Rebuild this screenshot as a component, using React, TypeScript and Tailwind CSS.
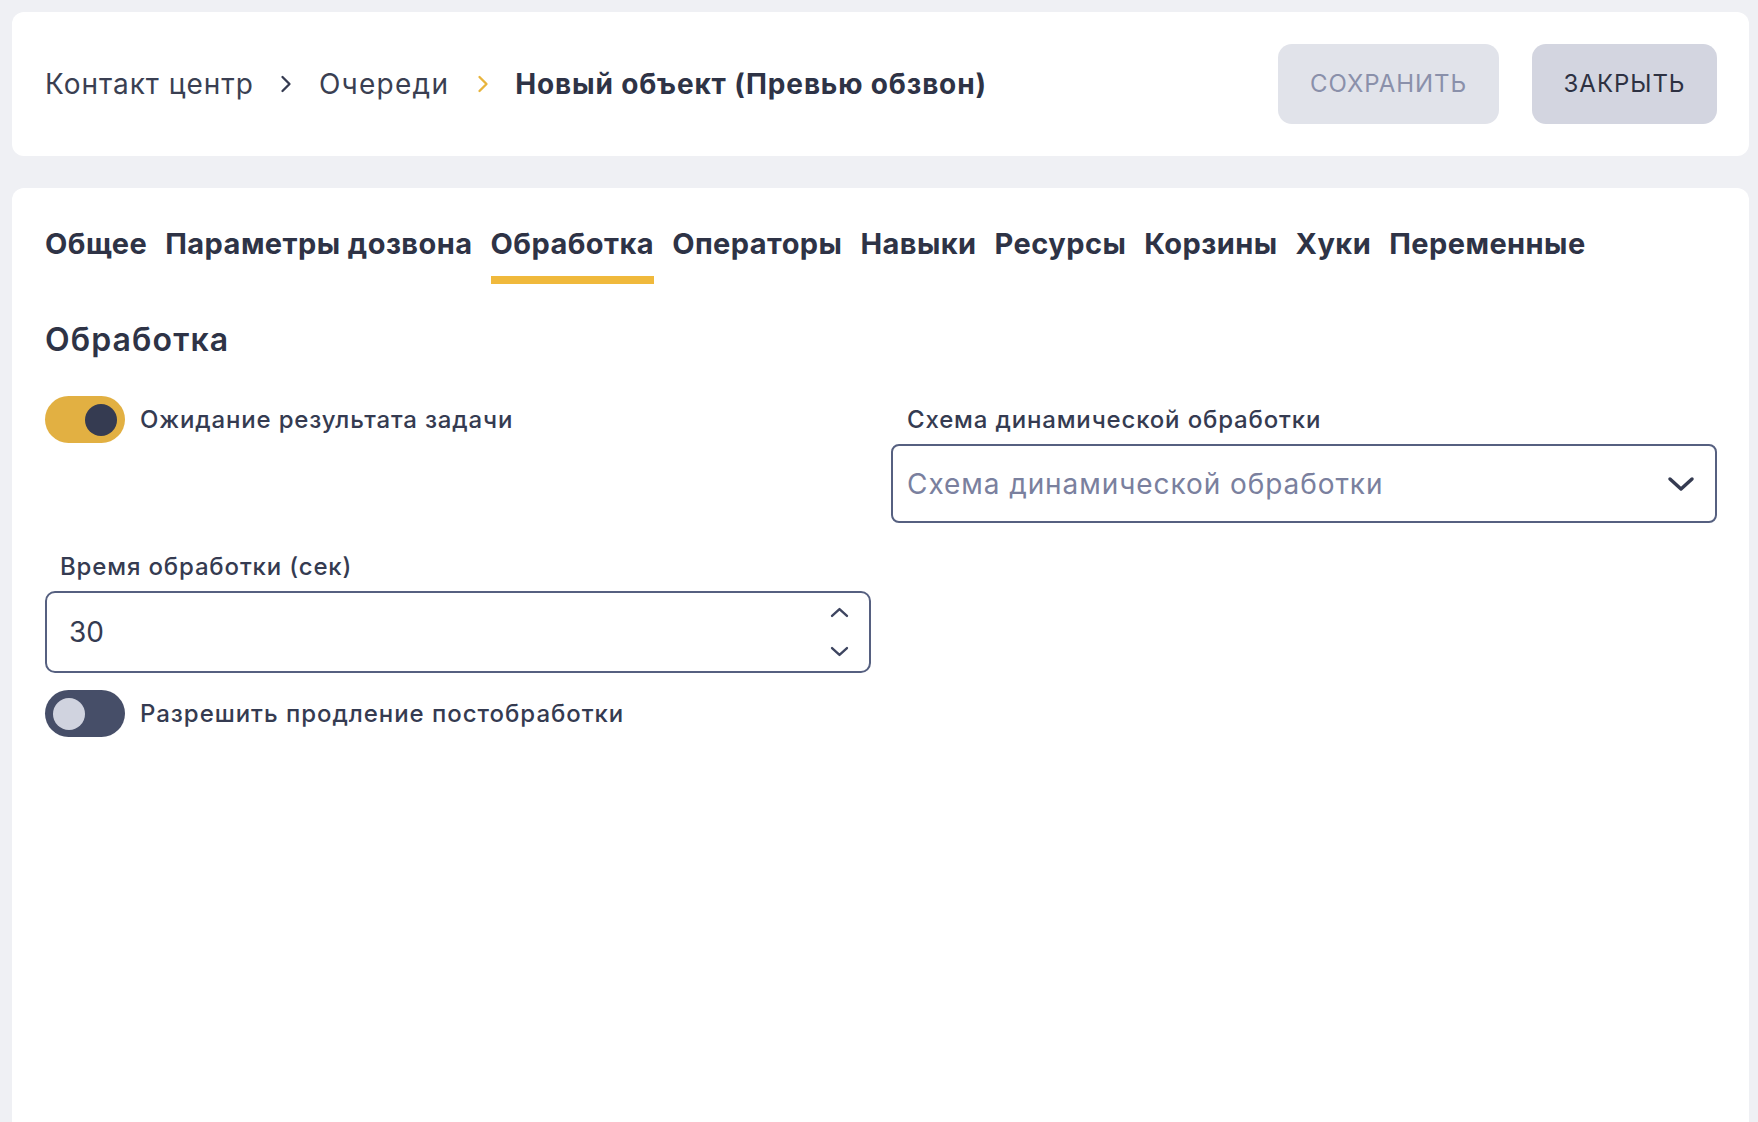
import { ChevronRight } from "lucide-react";

const tabs = [
  "Общее",
  "Параметры дозвона",
  "Обработка",
  "Операторы",
  "Навыки",
  "Ресурсы",
  "Корзины",
  "Хуки",
  "Переменные",
];

function Toggle({ on }: { on: boolean }) {
  return (
    <div
      className={`flex h-[47px] w-[80px] shrink-0 items-center rounded-full px-2 ${
        on ? "justify-end bg-[#e2b042]" : "justify-start bg-[#464e68]"
      }`}
    >
      <div className={`h-8 w-8 rounded-full ${on ? "bg-[#353b51]" : "bg-[#d0d3df]"}`} />
    </div>
  );
}

function Chevron({ up, className }: { up?: boolean; className: string }) {
  return (
    <svg viewBox="0 0 28 16" className={className} fill="none">
      <polyline
        points={up ? "3,13 14,3 25,13" : "3,3 14,13 25,3"}
        stroke="currentColor"
        strokeWidth={3.5}
        strokeLinecap="round"
        strokeLinejoin="round"
      />
    </svg>
  );
}

export default function App() {
  return (
    <div className="min-h-screen bg-[#eff0f4] pl-3 pr-[9px] pt-3 font-['Inter','Noto_Sans',sans-serif] text-[#353b51]">
      <header className="flex h-[144px] items-center justify-between rounded-xl bg-white pl-[33px] pr-8">
        <nav className="flex items-center text-[28px] tracking-[0.035em]">
          <span className="text-[#3a3f52]">Контакт центр</span>
          <ChevronRight className="ml-[18px] mr-[19px] h-7 w-7 text-[#353b51]" strokeWidth={2} />
          <span className="tracking-[0.045em] text-[#3a3f52]">Очереди</span>
          <ChevronRight className="ml-[20px] mr-[18px] h-7 w-7 text-[#e8b43c]" strokeWidth={2} />
          <span className="font-bold tracking-[0.03em] text-[#2e3346]">Новый объект (Превью обзвон)</span>
        </nav>
        <div className="flex items-center gap-[33px]">
          <button className="h-20 w-[221px] rounded-[14px] bg-[#e1e3ea] text-[24px] tracking-[0.04em] text-[#8a90aa]">
            СОХРАНИТЬ
          </button>
          <button className="h-20 w-[185px] rounded-[14px] bg-[#d3d5e0] text-[24px] tracking-[0.04em] text-[#2d3142]">
            ЗАКРЫТЬ
          </button>
        </div>
      </header>

      <main className="mt-8 min-h-[934px] rounded-t-xl bg-white pl-[33px] pr-8 pt-[39px]">
        <div className="flex items-end gap-[18px]">
          {tabs.map((t) => (
            <div
              key={t}
              className={`border-b-[8px] pb-[15px] text-[29px] font-bold leading-[34px] tracking-[0.015em] text-[#2e3346] ${
                t === "Обработка" ? "border-[#f0b93c]" : "border-transparent"
              }`}
            >
              {t}
            </div>
          ))}
        </div>

        <h2 className="mt-[38px] text-[32px] font-semibold leading-[36px] tracking-[0.035em] text-[#2e3346]">
          Обработка
        </h2>

        <div className="mt-[38px] grid grid-cols-2 items-start gap-x-5 gap-y-5">
          <div className="flex items-center gap-[15px]">
            <Toggle on />
            <span className="text-[24px] font-medium tracking-[0.035em]">Ожидание результата задачи</span>
          </div>
          <div>
            <div className="flex h-12 items-center px-4 text-[24px] font-medium tracking-[0.035em]">
              Схема динамической обработки
            </div>
            <div className="flex h-[79px] items-center justify-between rounded-lg border-2 border-[#566080] pl-[14px] pr-[20px]">
              <span className="text-[28px] tracking-[0.033em] text-[#7a809e]">Схема динамической обработки</span>
              <Chevron className="h-4 w-7 text-[#353b51]" />
            </div>
          </div>

          <div>
            <div className="flex h-12 items-center px-[15px] text-[24px] font-medium tracking-[0.035em]">
              Время обработки (сек)
            </div>
            <div className="flex h-[82px] items-center justify-between rounded-[10px] border-2 border-[#566080] pl-[22px] pr-[20px]">
              <span className="text-[28px]">30</span>
              <div className="flex flex-col items-center gap-[28px] text-[#3e4560]">
                <Chevron up className="h-[11px] w-[19px]" />
                <Chevron className="h-[11px] w-[19px]" />
              </div>
            </div>
            <div className="mt-[17px] flex items-center gap-[15px]">
              <Toggle on={false} />
              <span className="text-[24px] font-medium tracking-[0.04em]">Разрешить продление постобработки</span>
            </div>
          </div>
          <div />
        </div>
      </main>
    </div>
  );
}
